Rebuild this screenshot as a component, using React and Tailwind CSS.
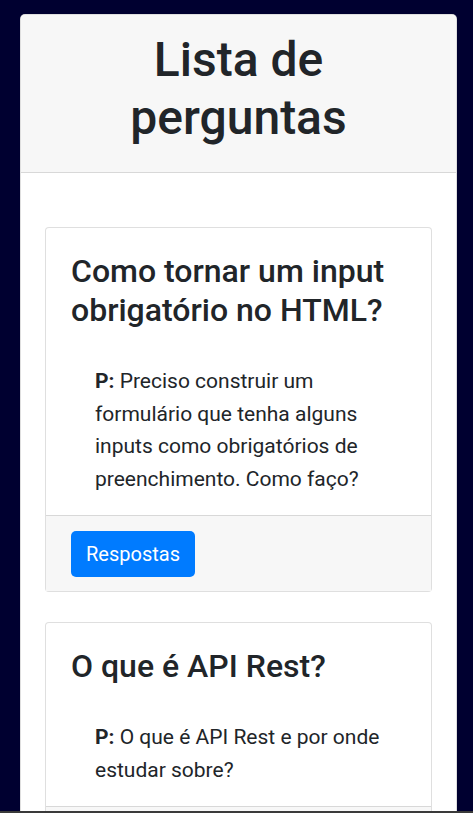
const perguntas = [
  {
    titulo: "Como tornar um input obrigatório no HTML?",
    descricao:
      "Preciso construir um formulário que tenha alguns inputs como obrigatórios de preenchimento. Como faço?",
  },
  {
    titulo: "O que é API Rest?",
    descricao: "O que é API Rest e por onde estudar sobre?",
  },
];

const PerguntaCard = ({ pergunta }) => (
  <div className="bg-white border border-black/[0.125] rounded-[4px]">
    <div className="px-[25px] pt-[24px] pb-[20px]">
      <h2 className="text-[32px] leading-[38.4px] font-medium text-[#212529]">
        {pergunta.titulo}
      </h2>
      <p className="mt-[36px] pl-[24px] text-[21px] leading-[32.5px] text-[#212529]">
        <strong className="font-bold">P:</strong>&nbsp;{pergunta.descricao}
      </p>
    </div>
    <div className="bg-[#f7f7f7] border-t border-black/[0.125] px-[25px] pt-[15px] pb-[14px]">
      <button className="bg-[#007bff] text-white text-[20px] leading-[30px] px-[15px] py-2 rounded-[5px]">
        Respostas
      </button>
    </div>
  </div>
);

export default function App() {
  return (
    <div
      className="h-[813px] overflow-hidden bg-[#000030] flex flex-col"
      style={{ fontFamily: "Roboto, 'Liberation Sans', sans-serif" }}
    >
      <div className="flex-1 min-h-0 overflow-hidden pl-[20px] pr-[16px] pt-[14px]">
        <div className="bg-white border border-black/[0.125] rounded-[5px]">
          {/* Header */}
          <div className="bg-[#f7f7f7] border-b border-black/[0.125] px-5 pt-[16px] pb-[26px] rounded-t-[5px]">
            <h1 className="text-center text-[48px] leading-[57.6px] font-medium text-[#212529]">
              Lista de perguntas
            </h1>
          </div>

          {/* Body */}
          <div className="px-6 pt-[54px] pb-6 flex flex-col gap-[30px]">
            {perguntas.map((p) => (
              <PerguntaCard key={p.titulo} pergunta={p} />
            ))}
          </div>
        </div>
      </div>
      <div className="h-[2px] bg-[#3a3a3a] shrink-0" />
    </div>
  );
}
